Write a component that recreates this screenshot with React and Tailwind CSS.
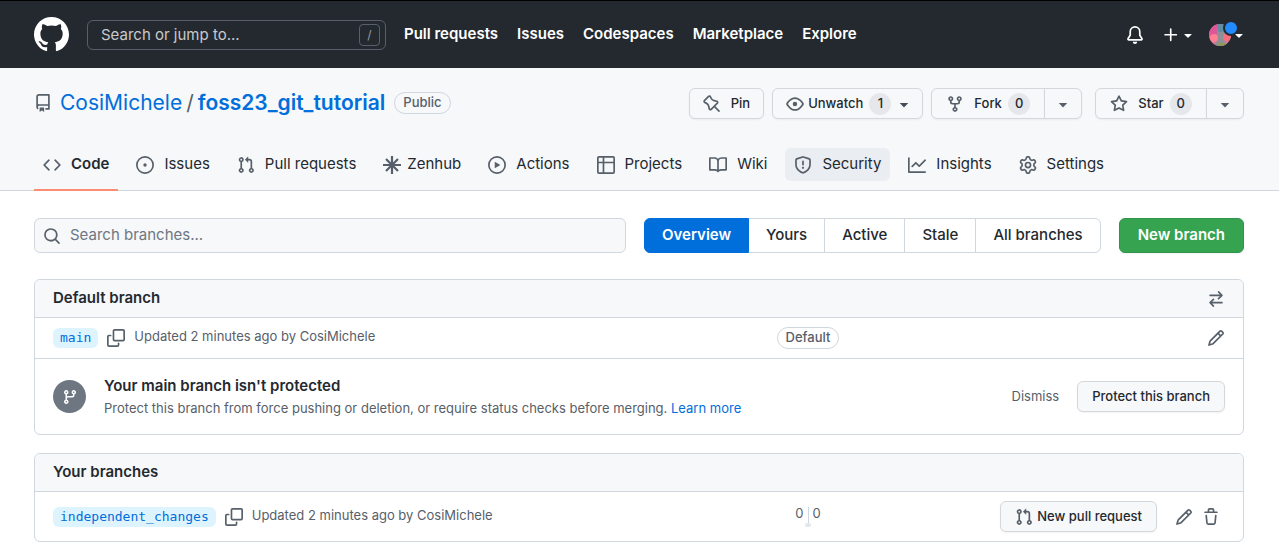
import React, { useState } from 'react'

const paths = {
    github: 'M8 0c4.42 0 8 3.58 8 8a8.013 8.013 0 0 1-5.45 7.59c-.4.08-.55-.17-.55-.38 0-.27.01-1.13.01-2.2 0-.75-.25-1.23-.54-1.48 1.78-.2 3.65-.88 3.65-3.95 0-.88-.31-1.59-.82-2.15.08-.2.36-1.02-.08-2.12 0 0-.67-.22-2.2.82-.64-.18-1.32-.27-2-.27-.68 0-1.36.09-2 .27-1.53-1.03-2.2-.82-2.2-.82-.44 1.1-.16 1.92-.08 2.12-.51.56-.82 1.28-.82 2.15 0 3.06 1.86 3.75 3.64 3.95-.23.2-.44.55-.51 1.07-.46.21-1.61.55-2.33-.66-.15-.24-.6-.83-1.23-.82-.67.01-.27.38.01.53.34.19.73.9.82 1.13.16.45.68 1.31 2.69.94 0 .67.01 1.3.01 1.49 0 .21-.15.45-.55.38A7.995 7.995 0 0 1 0 8c0-4.42 3.58-8 8-8Z',
    repo: 'M2 2.5A2.5 2.5 0 0 1 4.5 0h8.75a.75.75 0 0 1 .75.75v12.5a.75.75 0 0 1-.75.75h-2.5a.75.75 0 0 1 0-1.5h1.75v-2h-8a1 1 0 0 0-.714 1.7.75.75 0 1 1-1.072 1.05A2.495 2.495 0 0 1 2 11.5Zm10.5-1h-8a1 1 0 0 0-1 1v6.708A2.486 2.486 0 0 1 4.5 9h8ZM5 12.25a.25.25 0 0 1 .25-.25h3.5a.25.25 0 0 1 .25.25v3.25a.25.25 0 0 1-.4.2l-1.45-1.087a.249.249 0 0 0-.3 0L5.4 15.7a.25.25 0 0 1-.4-.2Z',
    pin: 'M4.456.734a1.75 1.75 0 0 1 2.826.504l.613 1.327a3.081 3.081 0 0 0 2.084 1.707l2.454.584c1.332.317 1.8 1.972.832 2.94L11.06 10l3.72 3.72a.748.748 0 0 1-.332 1.265.75.75 0 0 1-.729-.205L10 11.06l-2.204 2.205c-.968.968-2.623.5-2.94-.832l-.584-2.454a3.081 3.081 0 0 0-1.707-2.084l-1.327-.613a1.75 1.75 0 0 1-.504-2.826L4.456.734ZM5.92 1.866a.25.25 0 0 0-.404-.072L1.794 5.516a.25.25 0 0 0 .072.404l1.328.613A4.582 4.582 0 0 1 5.73 9.63l.584 2.454a.25.25 0 0 0 .42.12l5.47-5.47a.25.25 0 0 0-.12-.42L9.63 5.73a4.581 4.581 0 0 1-3.098-2.537L5.92 1.866Z',
    eye: 'M8 2c1.981 0 3.671.992 4.933 2.078 1.27 1.091 2.187 2.345 2.637 3.023a1.62 1.62 0 0 1 0 1.798c-.45.678-1.367 1.932-2.637 3.023C11.67 13.008 9.981 14 8 14c-1.981 0-3.671-.992-4.933-2.078C1.797 10.83.88 9.576.43 8.898a1.62 1.62 0 0 1 0-1.798c.45-.677 1.367-1.931 2.637-3.022C4.33 2.992 6.019 2 8 2ZM1.679 7.932a.12.12 0 0 0 0 .136c.411.622 1.241 1.75 2.366 2.717C5.176 11.758 6.527 12.5 8 12.5c1.473 0 2.825-.742 3.955-1.715 1.124-.967 1.954-2.096 2.366-2.717a.12.12 0 0 0 0-.136c-.412-.621-1.242-1.75-2.366-2.717C10.824 4.242 9.473 3.5 8 3.5c-1.473 0-2.825.742-3.955 1.715-1.124.967-1.954 2.096-2.366 2.717ZM8 10a2 2 0 1 1-.001-3.999A2 2 0 0 1 8 10Z',
    fork: 'M5 5.372v.878c0 .414.336.75.75.75h4.5a.75.75 0 0 0 .75-.75v-.878a2.25 2.25 0 1 1 1.5 0v.878a2.25 2.25 0 0 1-2.25 2.25h-1.5v2.128a2.251 2.251 0 1 1-1.5 0V8.5h-1.5A2.25 2.25 0 0 1 3.5 6.25v-.878a2.25 2.25 0 1 1 1.5 0ZM5 3.25a.75.75 0 1 0-1.5 0 .75.75 0 0 0 1.5 0Zm6.75.75a.75.75 0 1 0 0-1.5.75.75 0 0 0 0 1.5Zm-3 8.75a.75.75 0 1 0-1.5 0 .75.75 0 0 0 1.5 0Z',
    star: 'M8 .25a.75.75 0 0 1 .673.418l1.882 3.815 4.21.612a.75.75 0 0 1 .416 1.279l-3.046 2.97.719 4.192a.751.751 0 0 1-1.088.791L8 12.347l-3.766 1.98a.75.75 0 0 1-1.088-.79l.72-4.194L.818 6.374a.75.75 0 0 1 .416-1.28l4.21-.611L7.327.668A.75.75 0 0 1 8 .25Zm0 2.445L6.615 5.5a.75.75 0 0 1-.564.41l-3.097.45 2.24 2.184a.75.75 0 0 1 .216.664l-.528 3.084 2.769-1.456a.75.75 0 0 1 .698 0l2.77 1.456-.53-3.084a.75.75 0 0 1 .216-.664l2.24-2.183-3.096-.45a.75.75 0 0 1-.564-.41L8 2.694Z',
    code: 'm11.28 3.22 4.25 4.25a.75.75 0 0 1 0 1.06l-4.25 4.25a.749.749 0 0 1-1.275-.326.749.749 0 0 1 .215-.734L13.94 8l-3.72-3.72a.749.749 0 0 1 .326-1.275.749.749 0 0 1 .734.215Zm-6.56 0a.751.751 0 0 1 1.042.018.751.751 0 0 1 .018 1.042L2.06 8l3.72 3.72a.749.749 0 0 1-.326 1.275.749.749 0 0 1-.734-.215L.47 8.53a.75.75 0 0 1 0-1.06Z',
    issue: 'M8 9.5a1.5 1.5 0 1 0 0-3 1.5 1.5 0 0 0 0 3ZM8 0a8 8 0 1 1 0 16A8 8 0 0 1 8 0ZM1.5 8a6.5 6.5 0 1 0 13 0 6.5 6.5 0 0 0-13 0Z',
    pull: 'M1.5 3.25a2.25 2.25 0 1 1 3 2.122v5.256a2.251 2.251 0 1 1-1.5 0V5.372A2.25 2.25 0 0 1 1.5 3.25Zm5.677-.177L9.573.677A.25.25 0 0 1 10 .854V2.5h1A2.5 2.5 0 0 1 13.5 5v5.628a2.251 2.251 0 1 1-1.5 0V5a1 1 0 0 0-1-1h-1v1.646a.25.25 0 0 1-.427.177L7.177 3.427a.25.25 0 0 1 0-.354ZM3.75 2.5a.75.75 0 1 0 0 1.5.75.75 0 0 0 0-1.5Zm0 9.5a.75.75 0 1 0 0 1.5.75.75 0 0 0 0-1.5Zm8.25.75a.75.75 0 1 0 1.5 0 .75.75 0 0 0-1.5 0Z',
    play: 'M8 0a8 8 0 1 1 0 16A8 8 0 0 1 8 0ZM1.5 8a6.5 6.5 0 1 0 13 0 6.5 6.5 0 0 0-13 0Zm4.879-2.773 4.264 2.559a.25.25 0 0 1 0 .428l-4.264 2.559A.25.25 0 0 1 6 10.559V5.442a.25.25 0 0 1 .379-.215Z',
    table: 'M0 1.75C0 .784.784 0 1.75 0h12.5C15.216 0 16 .784 16 1.75v12.5A1.75 1.75 0 0 1 14.25 16H1.75A1.75 1.75 0 0 1 0 14.25ZM6.5 6.5v8h7.75a.25.25 0 0 0 .25-.25V6.5Zm8-1.5V1.75a.25.25 0 0 0-.25-.25H6.5V5Zm-13 1.5v7.75c0 .138.112.25.25.25H5v-8ZM5 5V1.5H1.75a.25.25 0 0 0-.25.25V5Z',
    book: 'M0 1.75A.75.75 0 0 1 .75 1h4.253c1.227 0 2.317.59 3 1.501A3.743 3.743 0 0 1 11.006 1h4.245a.75.75 0 0 1 .75.75v10.5a.75.75 0 0 1-.75.75h-4.507a2.25 2.25 0 0 0-1.591.659l-.622.621a.75.75 0 0 1-1.06 0l-.622-.621A2.25 2.25 0 0 0 5.258 13H.75a.75.75 0 0 1-.75-.75Zm7.251 10.324.004-5.073-.002-2.253A2.25 2.25 0 0 0 5.003 2.5H1.5v9h3.757a3.75 3.75 0 0 1 1.994.574ZM8.755 4.75l-.004 7.322a3.752 3.752 0 0 1 1.992-.572H14.5v-9h-3.495a2.25 2.25 0 0 0-2.25 2.25Z',
    shield: 'M7.467.133a1.748 1.748 0 0 1 1.066 0l5.25 1.68A1.75 1.75 0 0 1 15 3.48V7c0 1.566-.32 3.182-1.303 4.682-.983 1.498-2.585 2.813-5.032 3.855a1.697 1.697 0 0 1-1.33 0c-2.447-1.042-4.049-2.357-5.032-3.855C1.32 10.182 1 8.566 1 7V3.48a1.755 1.755 0 0 1 1.217-1.667Zm.61 1.429a.25.25 0 0 0-.153 0l-5.25 1.68a.25.25 0 0 0-.174.238V7c0 1.358.275 2.666 1.057 3.86.784 1.194 2.121 2.34 4.366 3.297a.196.196 0 0 0 .154 0c2.245-.956 3.582-2.104 4.366-3.298C13.225 9.666 13.5 8.36 13.5 7V3.48a.251.251 0 0 0-.174-.237l-5.25-1.68ZM8.75 4.75v3a.75.75 0 0 1-1.5 0v-3a.75.75 0 0 1 1.5 0ZM9 10.5a1 1 0 1 1-2 0 1 1 0 0 1 2 0Z',
    graph: 'M1.5 1.75V13.5h13.75a.75.75 0 0 1 0 1.5H.75a.75.75 0 0 1-.75-.75V1.75a.75.75 0 0 1 1.5 0Zm14.28 2.53-5.25 5.25a.75.75 0 0 1-1.06 0L7 7.06 4.28 9.78a.751.751 0 0 1-1.042-.018.751.751 0 0 1-.018-1.042l3.25-3.25a.75.75 0 0 1 1.06 0L10 7.94l4.72-4.72a.751.751 0 0 1 1.042.018.751.751 0 0 1 .018 1.042Z',
    gear: 'M8 0a8.2 8.2 0 0 1 .701.031C9.444.095 9.99.645 10.16 1.29l.288 1.107c.018.066.079.158.212.224.231.114.454.243.668.386.123.082.233.09.299.071l1.103-.303c.644-.176 1.392.021 1.82.63.27.385.506.792.704 1.218.315.675.111 1.422-.364 1.891l-.814.806c-.049.048-.098.147-.088.294.016.257.016.515 0 .772-.01.147.038.246.088.294l.814.806c.475.469.679 1.216.364 1.891a7.977 7.977 0 0 1-.704 1.217c-.428.61-1.176.807-1.82.63l-1.102-.302c-.067-.019-.177-.011-.3.071a5.909 5.909 0 0 1-.668.386c-.133.066-.194.158-.211.224l-.29 1.106c-.168.646-.715 1.196-1.458 1.26a8.006 8.006 0 0 1-1.402 0c-.743-.064-1.289-.614-1.458-1.26l-.289-1.106c-.018-.066-.079-.158-.212-.224a5.738 5.738 0 0 1-.668-.386c-.123-.082-.233-.09-.299-.071l-1.103.303c-.644.176-1.392-.021-1.82-.63a8.12 8.12 0 0 1-.704-1.218c-.315-.675-.111-1.422.363-1.891l.815-.806c.05-.048.098-.147.088-.294a6.214 6.214 0 0 1 0-.772c.01-.147-.038-.246-.088-.294l-.815-.806C.635 6.045.431 5.298.746 4.623a7.92 7.92 0 0 1 .704-1.217c.428-.61 1.176-.807 1.82-.63l1.102.302c.067.019.177.011.3-.071.214-.143.437-.272.668-.386.133-.066.194-.158.211-.224l.29-1.106C6.009.645 6.556.095 7.299.03 7.53.01 7.764 0 8 0Zm-.571 1.525c-.036.003-.108.036-.137.146l-.289 1.105c-.147.561-.549.967-.998 1.189-.173.086-.34.183-.5.29-.417.278-.97.423-1.529.27l-1.103-.303c-.109-.03-.175.016-.195.045-.22.312-.412.644-.573.99-.014.031-.021.11.059.19l.815.806c.411.406.562.957.53 1.456a4.709 4.709 0 0 0 0 .582c.032.499-.119 1.05-.53 1.456l-.815.806c-.081.08-.073.159-.059.19.162.346.353.677.573.989.02.03.085.076.195.046l1.102-.303c.56-.153 1.113-.008 1.53.27.161.107.328.204.501.29.447.222.85.629.997 1.189l.289 1.105c.029.109.101.143.137.146a6.6 6.6 0 0 0 1.142 0c.036-.003.108-.036.137-.146l.289-1.105c.147-.561.549-.967.998-1.189.173-.086.34-.183.5-.29.417-.278.97-.423 1.529-.27l1.103.303c.109.029.175-.016.195-.045.22-.313.411-.644.573-.99.014-.031.021-.11-.059-.19l-.815-.806c-.411-.406-.562-.957-.53-1.456a4.709 4.709 0 0 0 0-.582c-.032-.499.119-1.05.53-1.456l.815-.806c.081-.08.073-.159.059-.19a6.464 6.464 0 0 0-.573-.989c-.02-.03-.085-.076-.195-.046l-1.102.303c-.56.153-1.113.008-1.53-.27a4.44 4.44 0 0 0-.501-.29c-.447-.222-.85-.629-.997-1.189l-.289-1.105c-.029-.11-.101-.143-.137-.146a6.6 6.6 0 0 0-1.142 0ZM11 8a3 3 0 1 1-6 0 3 3 0 0 1 6 0ZM9.5 8a1.5 1.5 0 1 0-3.001.001A1.5 1.5 0 0 0 9.5 8Z',
    bell: 'M8 16a2 2 0 0 0 1.985-1.75c.017-.137-.097-.25-.235-.25h-3.5c-.138 0-.252.113-.235.25A2 2 0 0 0 8 16ZM3 5a5 5 0 0 1 10 0v2.947c0 .05.015.098.042.139l1.703 2.555A1.519 1.519 0 0 1 13.482 13H2.518a1.516 1.516 0 0 1-1.263-2.36l1.703-2.554A.255.255 0 0 0 3 7.947Zm5-3.5A3.5 3.5 0 0 0 4.5 5v2.947c0 .346-.102.683-.294.97l-1.703 2.556a.017.017 0 0 0-.003.01l.001.006c0 .002.002.004.004.006l.006.004.007.001h10.964l.007-.001.006-.004.004-.006.001-.007a.017.017 0 0 0-.003-.01l-1.703-2.554a1.745 1.745 0 0 1-.294-.97V5A3.5 3.5 0 0 0 8 1.5Z',
    plus: 'M7.75 2a.75.75 0 0 1 .75.75V7h4.25a.75.75 0 0 1 0 1.5H8.5v4.25a.75.75 0 0 1-1.5 0V8.5H2.75a.75.75 0 0 1 0-1.5H7V2.75A.75.75 0 0 1 7.75 2Z',
    caret: 'm4.427 7.427 3.396 3.396a.25.25 0 0 0 .354 0l3.396-3.396A.25.25 0 0 0 11.396 7H4.604a.25.25 0 0 0-.177.427Z',
    search: 'M10.68 11.74a6 6 0 0 1-7.922-8.982 6 6 0 0 1 8.982 7.922l3.04 3.04a.749.749 0 0 1-.326 1.275.749.749 0 0 1-.734-.215ZM11.5 7a4.499 4.499 0 1 0-8.997 0A4.499 4.499 0 0 0 11.5 7Z',
    swap: 'M5.22 14.78a.75.75 0 0 0 1.06-1.06L4.56 12h8.69a.75.75 0 0 0 0-1.5H4.56l1.72-1.72a.75.75 0 0 0-1.06-1.06l-3 3a.75.75 0 0 0 0 1.06l3 3Zm5.56-6.5a.75.75 0 1 1-1.06-1.06l1.72-1.72H2.75a.75.75 0 0 1 0-1.5h8.69L9.72 2.28a.75.75 0 0 1 1.06-1.06l3 3a.75.75 0 0 1 0 1.06l-3 3Z',
    pencil: 'M11.013 1.427a1.75 1.75 0 0 1 2.474 0l1.086 1.086a1.75 1.75 0 0 1 0 2.474l-8.61 8.61c-.21.21-.47.364-.756.445l-3.251.93a.75.75 0 0 1-.927-.928l.929-3.25c.081-.286.235-.547.445-.758l8.61-8.61Zm.176 4.823L9.75 4.81l-6.286 6.287a.253.253 0 0 0-.064.108l-.558 1.953 1.953-.558a.253.253 0 0 0 .108-.064Zm1.238-3.763a.25.25 0 0 0-.354 0L10.811 3.75l1.439 1.44 1.263-1.263a.25.25 0 0 0 0-.354Z',
    trash: 'M11 1.75V3h2.25a.75.75 0 0 1 0 1.5H2.75a.75.75 0 0 1 0-1.5H5V1.75C5 .784 5.784 0 6.75 0h2.5C10.216 0 11 .784 11 1.75ZM4.496 6.675l.66 6.6a.25.25 0 0 0 .249.225h5.19a.25.25 0 0 0 .249-.225l.66-6.6a.75.75 0 0 1 1.492.149l-.66 6.6A1.748 1.748 0 0 1 10.595 15h-5.19a1.75 1.75 0 0 1-1.741-1.575l-.66-6.6a.75.75 0 1 1 1.492-.15ZM6.5 1.75V3h3V1.75a.25.25 0 0 0-.25-.25h-2.5a.25.25 0 0 0-.25.25Z',
    branch: 'M9.5 3.25a2.25 2.25 0 1 1 3 2.122V6A2.5 2.5 0 0 1 10 8.5H6a1 1 0 0 0-1 1v1.128a2.251 2.251 0 1 1-1.5 0V5.372a2.25 2.25 0 1 1 1.5 0v1.836A2.493 2.493 0 0 1 6 7h4a1 1 0 0 0 1-1v-.628A2.25 2.25 0 0 1 9.5 3.25Zm-6 0a.75.75 0 1 0 1.5 0 .75.75 0 0 0-1.5 0Zm8.25-.75a.75.75 0 1 0 0 1.5.75.75 0 0 0 0-1.5ZM4.25 12a.75.75 0 1 0 0 1.5.75.75 0 0 0 0-1.5Z',
    copy: 'M0 6.75C0 5.784.784 5 1.75 5h1.5a.75.75 0 0 1 0 1.5h-1.5a.25.25 0 0 0-.25.25v7.5c0 .138.112.25.25.25h7.5a.25.25 0 0 0 .25-.25v-1.5a.75.75 0 0 1 1.5 0v1.5A1.75 1.75 0 0 1 9.25 16h-7.5A1.75 1.75 0 0 1 0 14.25ZM5 1.75C5 .784 5.784 0 6.75 0h7.5C15.216 0 16 .784 16 1.75v7.5A1.75 1.75 0 0 1 14.25 11h-7.5A1.75 1.75 0 0 1 5 9.25Zm1.75-.25a.25.25 0 0 0-.25.25v7.5c0 .138.112.25.25.25h7.5a.25.25 0 0 0 .25-.25v-7.5a.25.25 0 0 0-.25-.25Z',
};

const Icon = ({ name, className = 'size-[18px]' }) => (
    <svg viewBox="0 0 16 16" fill="currentColor" aria-hidden="true" className={`shrink-0 ${className}`}>
        <path d={paths[name]} />
    </svg>
);

const ZenhubIcon = () => (
    <svg viewBox="0 0 18 18" stroke="currentColor" strokeWidth="2.2" aria-hidden="true" className="size-[18px] shrink-0">
        <path d="M9 0v18M0 9h18M3 3l12 12M15 3 3 15" />
    </svg>
);

const Avatar = () => (
    <svg viewBox="0 0 22 22" aria-hidden="true" className="size-[22px] rounded-full">
        <rect width="22" height="22" fill="#d9769b" />
        <path d="M0 0h8v14H0z" fill="#e0559a" />
        <path d="M8 0h14v8l-6 4-7-2z" fill="#5f8fa0" />
        <path d="M8 8h7l1 14H6z" fill="#8f8f98" />
        <circle cx="5" cy="14" r="4" fill="#ff7f93" />
        <circle cx="18" cy="13" r="4" fill="#f5707c" />
        <path d="M9 19h10v3H9z" fill="#8f9a5c" />
    </svg>
);

const navLinks = ['Pull requests', 'Issues', 'Codespaces', 'Marketplace', 'Explore'];

const tabs = [
    { icon: 'code', label: 'Code' },
    { icon: 'issue', label: 'Issues' },
    { icon: 'pull', label: 'Pull requests' },
    { icon: 'zenhub', label: 'Zenhub' },
    { icon: 'play', label: 'Actions' },
    { icon: 'table', label: 'Projects' },
    { icon: 'book', label: 'Wiki' },
    { icon: 'shield', label: 'Security' },
    { icon: 'graph', label: 'Insights' },
    { icon: 'gear', label: 'Settings' },
];

const filters = ['Overview', 'Yours', 'Active', 'Stale', 'All branches'];

const Header = () => (
    <header className="flex h-[68px] items-center border-t border-black bg-[#24292f] pr-8 pl-[34px] text-white">
        <a href="#home" aria-label="Homepage">
            <Icon name="github" className="size-[35px]" />
        </a>
        <div className="ml-[18px] flex h-[30px] w-[299px] items-center rounded-md border border-[#57606a] pr-[5px] pl-[13px]">
            <input
                type="text"
                aria-label="Search or jump to"
                placeholder="Search or jump to..."
                className="min-w-0 flex-1 bg-transparent pt-[2px] text-[15px] outline-none placeholder:text-[#c8c9cb]"
            />
            <kbd className="flex h-[22px] w-[21px] items-center justify-center rounded-sm border border-[#57606a] font-[Inter,sans-serif] text-xs text-[#9a9ea3]">/</kbd>
        </div>
        <nav className="ml-[18px] flex gap-[19px] text-[15px] font-semibold">
            {navLinks.map(link => <a key={link} href="#nav">{link}</a>)}
        </nav>
        <div className="ml-auto flex items-center">
            <button aria-label="Notifications"><Icon name="bell" /></button>
            <button aria-label="Create new" className="ml-[18px] flex items-center">
                <Icon name="plus" />
                <Icon name="caret" className="size-4" />
            </button>
            <button aria-label="Account" className="relative ml-[13px] flex items-center">
                <Avatar />
                <span className="absolute -top-1 left-[14px] size-4 rounded-full border-2 border-[#24292f] bg-[#218bff]" />
                <Icon name="caret" className="relative size-4" />
            </button>
        </div>
    </header>
);

const Counter = ({ children }) => (
    <span className="flex h-[22px] min-w-[22px] items-center justify-center rounded-full bg-[#e5e7ea] px-[7px]">{children}</span>
);

const smallButton = 'flex h-[31px] items-center border border-[#d5d8db] bg-[#f6f8fa] text-[13px] font-medium text-[#24292f] shadow-xs';

const SplitButton = ({ icon, label, count }) => (
    <div className="flex">
        <button className={`${smallButton} rounded-l-md px-[14px]`}>
            <Icon name={icon} className="mr-[10px] size-[18px] text-[#57606a]" />
            {label}
            <span className="ml-[6px]"><Counter>{count}</Counter></span>
        </button>
        <button aria-label={`${label} options`} className={`${smallButton} -ml-px w-[38px] justify-center rounded-r-md`}>
            <Icon name="caret" className="size-[18px] text-[#57606a]" />
        </button>
    </div>
);

const RepoHeader = () => {
    const [activeTab, setActiveTab] = useState('Code');

    return (
        <div className="border-b border-[#d0d7de] bg-[#f6f8fa] pt-5 pr-[35px] pl-[34px]">
            <div className="flex h-[31px] items-center justify-between">
                <div className="flex items-center pb-[2px] text-[21px]">
                    <Icon name="repo" className="mr-[8px] size-[18px] text-[#57606a]" />
                    <a href="#owner" className="text-[#006edb]">CosiMichele</a>
                    <span className="mx-[4px] text-[#57606a]">/</span>
                    <a href="#repo" className="font-semibold text-[#006edb]">foss23_git_tutorial</a>
                    <span className="ml-[9px] flex h-[22px] items-center rounded-full border border-[#d0d7de] px-[8px] text-[13px] font-medium text-[#57606a]">Public</span>
                </div>
                <div className="flex">
                    <button className={`${smallButton} rounded-md px-[13px]`}>
                        <Icon name="pin" className="mr-[10px] size-[18px] text-[#57606a]" />
                        Pin
                    </button>
                    <button className={`${smallButton} ml-2 rounded-md pr-[9px] pl-[13px]`}>
                        <Icon name="eye" className="mr-[4px] size-[18px] text-[#57606a]" />
                        Unwatch
                        <span className="mr-[4px] ml-[6px]"><Counter>1</Counter></span>
                        <Icon name="caret" className="size-[18px] text-[#424a53]" />
                    </button>
                    <div className="ml-2"><SplitButton icon="fork" label="Fork" count={0} /></div>
                    <div className="ml-[13px]"><SplitButton icon="star" label="Star" count={0} /></div>
                </div>
            </div>
            <nav className="mt-[29px] flex gap-[9px]">
                {tabs.map(({ icon, label }) => (
                    <a
                        key={label}
                        href="#tab"
                        onClick={() => setActiveTab(label)}
                        className={`-mb-px border-b-2 pb-[8px] text-[15px] text-[#24292f] ${activeTab === label ? 'border-[#fd8c73] font-semibold' : 'border-transparent'}`}
                    >
                        <span className={`flex h-[33px] items-center rounded-md px-[9px] ${label === 'Security' ? 'bg-[#eaedf1]' : ''}`}>
                            <span className={`text-[#57606a] ${icon === 'zenhub' ? 'mr-[6px]' : 'mr-[10px]'}`}>
                                {icon === 'zenhub' ? <ZenhubIcon /> : <Icon name={icon} />}
                            </span>
                            {label}
                        </span>
                    </a>
                ))}
            </nav>
        </div>
    );
};

const BranchBox = ({ title, action, children }) => (
    <section className="rounded-md border border-[#d0d7de]">
        <div className="flex h-[38px] items-center justify-between rounded-t-md border-b border-[#d0d7de] bg-[#f6f8fa] px-[18px]">
            <h2 className="text-[15px] font-semibold">{title}</h2>
            {action}
        </div>
        {children}
    </section>
);

const BranchRow = ({ name, status, className, children }) => (
    <div className={`grid grid-cols-[1fr_120px_357px] items-center px-[18px] ${className}`}>
        <div className="flex items-center text-[13px] text-[#57606a]">
            <a href="#branch" className="flex h-5 items-center rounded-md bg-[#ddf4ff] px-[7px] font-['DejaVu_Sans_Mono',monospace] text-[#006edb]">{name}</a>
            <button aria-label="Copy branch name" className="mx-[9px]"><Icon name="copy" /></button>
            <span className="pb-[2px]">Updated 2 minutes ago by CosiMichele</span>
        </div>
        <div className="flex justify-center">{status}</div>
        <div className="flex items-center justify-end text-[#57606a]">{children}</div>
    </div>
);

const App = () => {
    const [filter, setFilter] = useState('Overview');

    return (
        <div className="bg-white font-[Inter,sans-serif] text-[#24292f]">
            <Header />
            <RepoHeader />
            <main className="pt-[27px] pr-[35px] pb-[10px] pl-[34px]">
                <div className="flex h-[35px]">
                    <label className="flex min-w-0 flex-1 items-center rounded-md border border-[#d0d7de] bg-[#f6f8fa] px-[8px] text-[#57606a]">
                        <Icon name="search" />
                        <input
                            type="search"
                            aria-label="Search branches"
                            placeholder="Search branches..."
                            className="ml-[9px] min-w-0 flex-1 bg-transparent text-[15px] outline-none placeholder:text-[#6e7781]"
                        />
                    </label>
                    <div className="ml-[18px] flex text-[15px] font-medium">
                        {filters.map(item => (
                            <button
                                key={item}
                                onClick={() => setFilter(item)}
                                className={`-ml-px border px-[17px] first:ml-0 first:rounded-l-md last:rounded-r-md ${filter === item ? 'z-10 border-[#006edb] bg-[#006edb] font-semibold text-white' : 'border-[#d0d7de]'}`}
                            >
                                {item}
                            </button>
                        ))}
                    </div>
                    <button className="ml-[18px] rounded-md border border-[#2f954a] bg-[#35a350] px-[18px] text-[15px] font-semibold text-white shadow-xs">New branch</button>
                </div>

                <div className="mt-[26px] flex flex-col gap-[18px]">
                    <BranchBox title="Default branch" action={<button aria-label="Change default branch" className="text-[#57606a]"><Icon name="swap" /></button>}>
                        <BranchRow
                            name="main"
                            className="h-[41px] border-b border-[#d0d7de]"
                            status={<span className="flex h-[22px] items-center rounded-full border border-[#d0d7de] px-[8px] text-[13px] font-medium text-[#57606a]">Default</span>}
                        >
                            <button aria-label="Rename branch"><Icon name="pencil" /></button>
                        </BranchRow>
                        <div className="flex h-[75px] items-center px-[18px]">
                            <span className="flex size-[33px] shrink-0 items-center justify-center rounded-full bg-[#6e7781] text-white">
                                <Icon name="branch" className="size-4" />
                            </span>
                            <div className="ml-[18px]">
                                <h3 className="text-[15px] leading-[22px] font-semibold">Your main branch isn't protected</h3>
                                <p className="text-[13px] leading-[22px] text-[#57606a]">
                                    Protect this branch from force pushing or deletion, or require status checks before merging. <a href="#learn" className="text-[#006edb]">Learn more</a>
                                </p>
                            </div>
                            <button className="mr-[18px] ml-auto text-[13px] text-[#57606a]">Dismiss</button>
                            <button className={`${smallButton} rounded-md px-[14px]`}>Protect this branch</button>
                        </div>
                    </BranchBox>

                    <BranchBox title="Your branches">
                        <BranchRow
                            name="independent_changes"
                            className="h-[49px]"
                            status={
                                <div className="flex text-[13px] leading-3 text-[#57606a]">
                                    <span className="px-[4px]">0</span>
                                    <span className="relative h-5 w-px bg-[#d0d7de]">
                                        <span className="absolute bottom-0 -left-[3px] h-1 w-[6px] rounded-full bg-[#e3e6ea]" />
                                    </span>
                                    <span className="px-[4px]">0</span>
                                </div>
                            }
                        >
                            <button className={`${smallButton} mr-[18px] rounded-md px-[14px]`}>
                                <Icon name="pull" className="mr-[4px] size-[18px] text-[#57606a]" />
                                New pull request
                            </button>
                            <button aria-label="Rename branch" className="mr-[9px]"><Icon name="pencil" /></button>
                            <button aria-label="Delete branch" className="mr-[5px]"><Icon name="trash" /></button>
                        </BranchRow>
                    </BranchBox>
                </div>
            </main>
        </div>
    );
};

export default App;
